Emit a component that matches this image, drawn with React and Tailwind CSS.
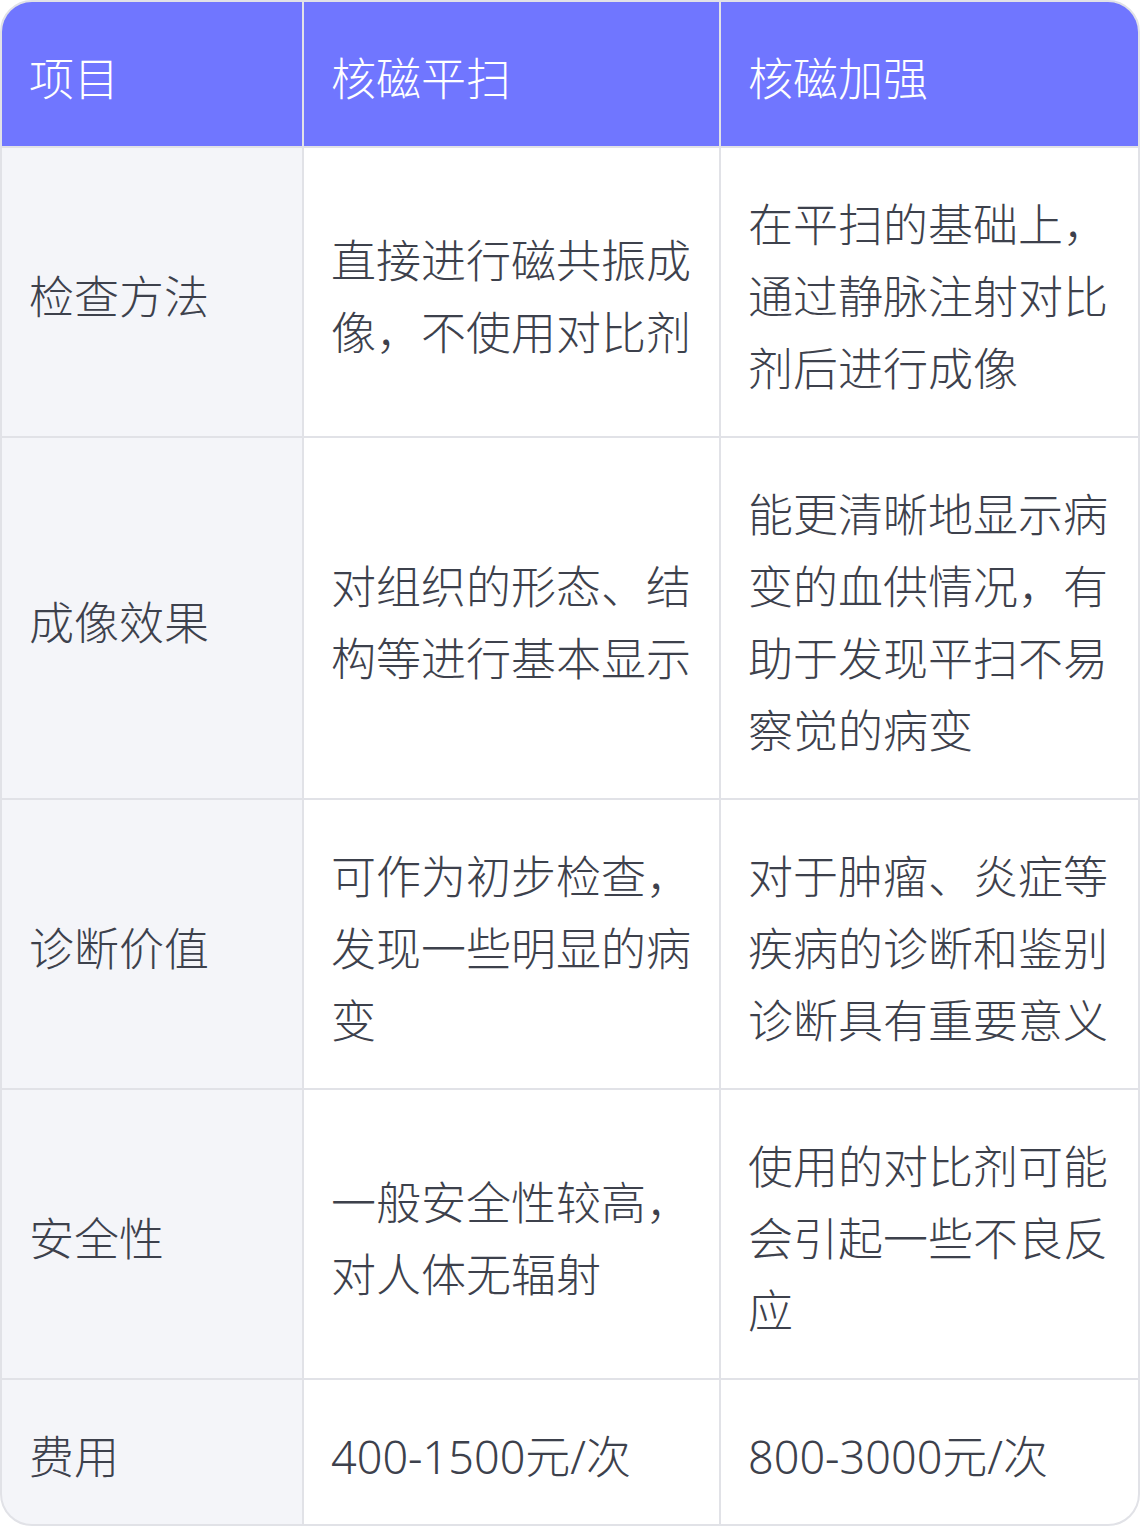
import React from "react";

const rows = [
  ["检查方法", "直接进行磁共振成像，不使用对比剂", "在平扫的基础上，通过静脉注射对比剂后进行成像"],
  ["成像效果", "对组织的形态、结构等进行基本显示", "能更清晰地显示病变的血供情况，有助于发现平扫不易察觉的病变"],
  ["诊断价值", "可作为初步检查，发现一些明显的病变", "对于肿瘤、炎症等疾病的诊断和鉴别诊断具有重要意义"],
  ["安全性", "一般安全性较高，对人体无辐射", "使用的对比剂可能会引起一些不良反应"],
  ["费用", "400-1500元/次", "800-3000元/次"],
];

const cell = "flex items-center pl-[27px] pr-[22px] pt-[41px] pb-[31px] text-[45px] leading-[72px] font-light";

export default function App() {
  return (
    <div
      className="w-[1140px] grid grid-cols-[300px_415px_417px] gap-[2px] bg-[#e1e2e7] border-2 border-[#e1e2e7] rounded-[32px] overflow-hidden"
      style={{ fontFamily: '"Noto Sans", "Noto Sans CJK SC", sans-serif' }}
    >
      {["项目", "核磁平扫", "核磁加强"].map((h) => (
        <div key={h} className={`${cell} bg-[#7076ff] text-white`}>
          {h}
        </div>
      ))}
      {rows.map((r) => (
        <React.Fragment key={r[0]}>
          <div className={`${cell} bg-[#f4f5f9] text-[#3d414c]`}>{r[0]}</div>
          <div className={`${cell} bg-white text-[#3d414c]`}>{r[1]}</div>
          <div className={`${cell} bg-white text-[#3d414c]`}>{r[2]}</div>
        </React.Fragment>
      ))}
    </div>
  );
}
